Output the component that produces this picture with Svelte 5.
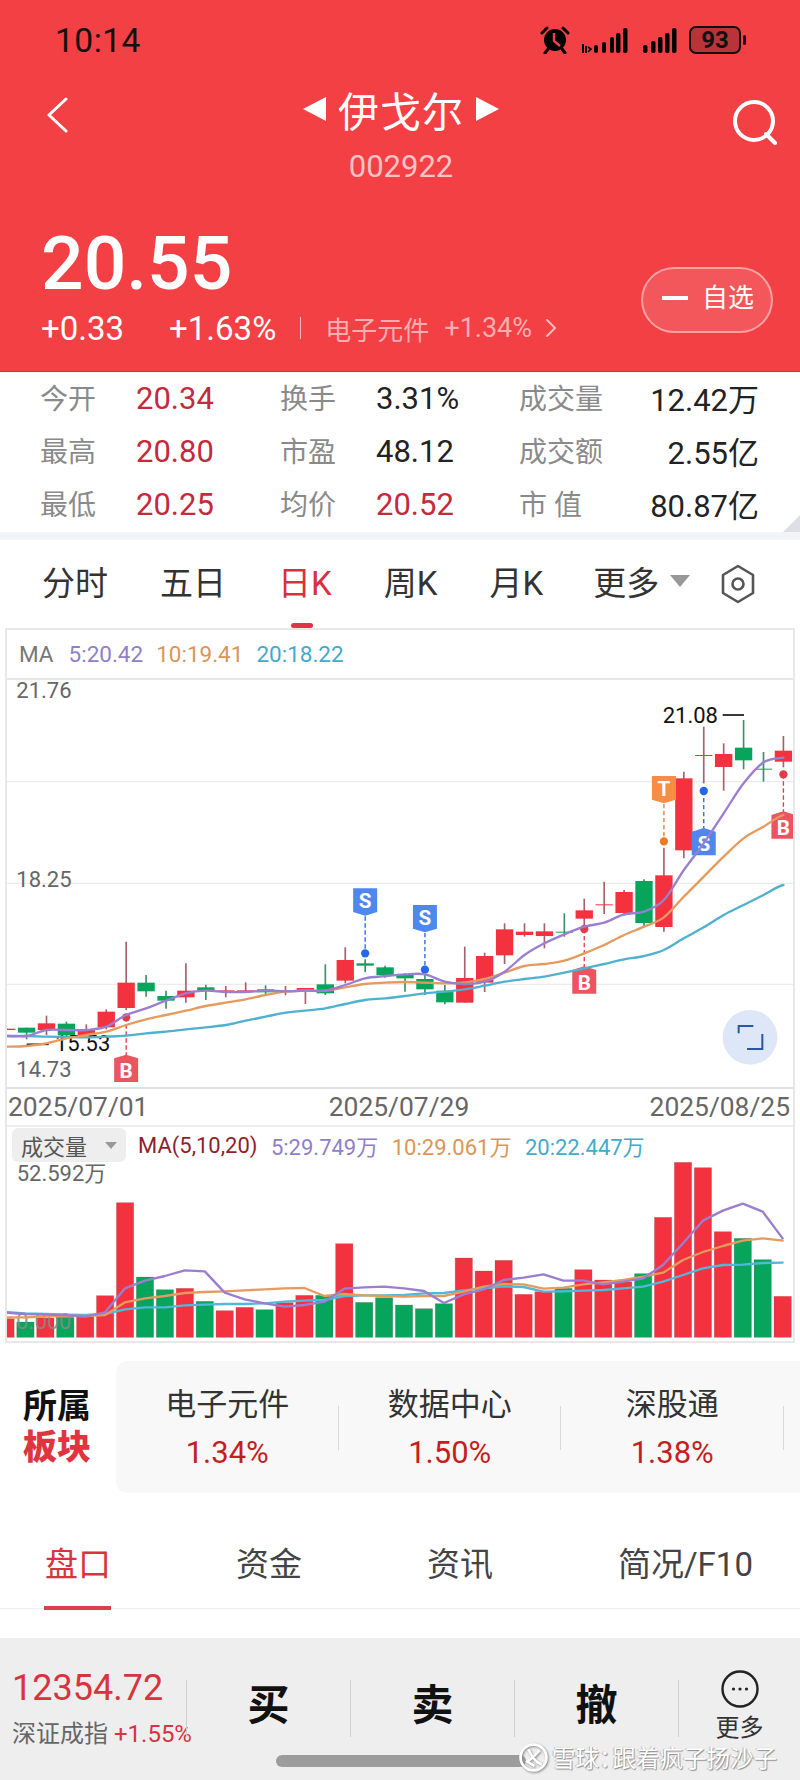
<script lang="ts">
    // chart data is kept in chart units: 3 units = 1px, x 0..2400
    const stats = [
        ["今开", "20.34", "up", "换手", "3.31%", "", "成交量", "12.42万"],
        ["最高", "20.80", "up", "市盈", "48.12", "", "成交额", "2.55亿"],
        ["最低", "20.25", "up", "均价", "20.52", "up", "市 值", "80.87亿"],
    ];
    const periods = ["分时", "五日", "日K", "周K", "月K"];
    const sectors = [
        ["电子元件", "1.34%"],
        ["数据中心", "1.50%"],
        ["深股通", "1.38%"],
    ];
    const subTabs = ["盘口", "资金", "资讯", "简况/F10"];

    // [body top, body bottom, high, low, up?]
    const candles: [number, number, number, number, number][] = [
        [1046, 1050, 1046, 1050, 1], [1043, 1058, 1043, 1078, 0], [1030, 1050, 1007, 1065, 1], [1031, 1066, 1025, 1070, 0],
        [1048, 1065, 1033, 1070, 1], [995, 1042, 988, 1048, 1], [908, 984, 785, 990, 1], [908, 934, 885, 950, 0],
        [948, 962, 932, 986, 0], [932, 952, 850, 968, 1], [922, 930, 914, 960, 0], [931, 934, 918, 952, 1],
        [931, 935, 907, 938, 1], [928, 937, 916, 945, 0], [932, 934, 918, 946, 1], [924, 930, 924, 972, 1],
        [913, 940, 853, 945, 0], [840, 902, 802, 910, 1], [850, 857, 838, 877, 0], [862, 885, 857, 893, 0],
        [885, 895, 880, 935, 0], [897, 928, 885, 945, 0], [932, 967, 915, 973, 0], [894, 968, 800, 968, 1],
        [828, 908, 818, 936, 1], [748, 826, 730, 852, 1], [755, 765, 730, 770, 1], [754, 768, 730, 805, 1],
        [755, 758, 700, 770, 0], [691, 716, 656, 735, 1], [673, 676, 605, 702, 1], [636, 699, 630, 707, 1],
        [603, 729, 598, 738, 0], [586, 741, 503, 755, 1], [295, 511, 275, 535, 1], [225, 228, 140, 310, 1],
        [222, 261, 190, 332, 1], [203, 241, 120, 268, 0], [266, 269, 216, 305, 0], [212, 245, 168, 262, 1],
    ];
    const cx = (i: number) => 20 + 59.75 * i;

    const ma5 = [1068, 1068, 1050, 1050, 1050, 1040, 1005, 985, 962, 940, 932, 936, 936, 932, 934, 932, 932, 915, 895, 888, 883, 883, 905, 912, 905, 875, 825, 790, 763, 740, 728, 703, 695, 660, 570, 490, 400, 310, 247, 233];
    const ma10 = [1100, 1098, 1090, 1075, 1065, 1055, 1035, 1018, 1005, 992, 978, 968, 958, 945, 935, 932, 932, 922, 912, 908, 906, 908, 910, 907, 897, 878, 858, 852, 842, 820, 795, 765, 740, 712, 650, 590, 530, 475, 440, 405];
    const ma20 = [1068, 1068, 1070, 1071, 1072, 1070, 1067, 1060, 1055, 1048, 1042, 1035, 1022, 1010, 998, 992, 985, 972, 960, 955, 948, 940, 935, 928, 917, 905, 897, 890, 878, 865, 852, 838, 828, 810, 775, 742, 705, 675, 645, 615];

    // volume: [bar top, up?]
    const bars: [number, number][] = [
        [626, 1], [636, 0], [624, 1], [622, 0], [620, 1], [557, 1], [278, 1], [501, 0], [539, 0], [535, 1],
        [574, 0], [602, 1], [592, 1], [599, 0], [578, 1], [556, 1], [556, 0], [401, 1], [577, 0], [563, 0],
        [585, 0], [596, 0], [581, 0], [444, 1], [483, 1], [451, 1], [553, 1], [545, 1], [535, 0], [479, 1],
        [510, 1], [516, 1], [491, 0], [322, 1], [157, 1], [173, 1], [365, 1], [385, 0], [449, 0], [559, 1],
    ];
    const bx = (i: number) => 16.5 + 59.78 * i;
    const vol5 = [608, 612, 614, 615, 620, 607, 535, 512, 498, 481, 484, 548, 568, 580, 590, 585, 575, 536, 532, 530, 535, 543, 579, 553, 538, 510, 503, 493, 512, 512, 523, 515, 505, 465, 400, 332, 302, 281, 305, 385];
    const vol10 = [622, 622, 620, 617, 618, 615, 577, 565, 558, 549, 546, 544, 541, 538, 535, 534, 558, 552, 556, 558, 560, 558, 558, 545, 530, 522, 523, 536, 533, 523, 517, 510, 500, 488, 450, 426, 408, 392, 385, 392];
    const vol20 = [606, 610, 612, 614, 615, 612, 598, 592, 592, 586, 584, 582, 582, 580, 575, 572, 570, 558, 556, 556, 555, 550, 549, 541, 535, 529, 531, 545, 544, 542, 540, 535, 530, 515, 495, 475, 465, 464, 459, 458];

    // [candle index, letter, tag top, dot y, colour of the tag, colour of the dot]
    const marks = [
        { i: 6, t: "B", top: 1135, dot: 1012, tag: "#ea5560", c: "#e23b4c" },
        { i: 18, t: "S", top: 625, dot: 820, tag: "#4f87ee", c: "#2468e6" },
        { i: 21, t: "S", top: 675, dot: 869, tag: "#4f87ee", c: "#2468e6" },
        { i: 29, t: "B", top: 870, dot: 747, tag: "#ea5560", c: "#e23b4c" },
        { i: 33, t: "T", top: 288, dot: 484, tag: "#f68d45", c: "#f07a24" },
        { i: 35, t: "S", top: 455, dot: 333, tag: "#4f87ee", c: "#2468e6" },
        { i: 39, t: "B", top: 405, dot: 283, tag: "#ea5560", c: "#e23b4c" },
    ];

    function tagPath(x: number, top: number, up: boolean) {
        const l = x - 36, r = x + 36, b = top + 71;
        return up
            ? `M${l} ${top}L${x} ${top - 11}L${r} ${top}V${b}H${l}Z`
            : `M${l} ${top}H${r}V${b}L${x} ${b + 11}L${l} ${b}Z`;
    }

    function line(ys: number[], xOf: (i: number) => number) {
        let d = `M${xOf(0)} ${ys[0]}`;
        for (let i = 0; i < ys.length - 1; i++) {
            const p0 = ys[Math.max(i - 1, 0)], p1 = ys[i], p2 = ys[i + 1], p3 = ys[Math.min(i + 2, ys.length - 1)];
            const k = 59.75 / 3;
            d += `C${xOf(i) + k} ${p1 + (p2 - p0) / 6} ${xOf(i + 1) - k} ${p2 - (p3 - p1) / 6} ${xOf(i + 1)} ${p2}`;
        }
        return d;
    }
    const vline = (ys: number[]) => "M" + ys.map((y, i) => `${bx(i)} ${y}`).join("L");
</script>

<div class="page">
    <header class="top">
        <div class="status">
            <span class="time">10:14</span>
            <div class="status-icons">
                <svg width="30" height="28" viewBox="0 0 30 28">
                    <path d="M2 7 7 2M28 7 23 2" stroke="#000" stroke-width="3" stroke-linecap="round" fill="none" />
                    <path d="M8 23 5 27M22 23 25 27" stroke="#000" stroke-width="3" stroke-linecap="round" fill="none" />
                    <circle cx="15" cy="14" r="11" fill="#000" />
                    <path d="M14 7V15L20 20" stroke="#f24045" stroke-width="2.4" fill="none" />
                </svg>
                <svg class="sig one" width="47" height="27" viewBox="0 0 47 27">
                    <path d="M2 17V26M5 19V26" stroke="#000" stroke-width="2" />
                    <path d="M7 20 10 22 7 25" stroke="#000" stroke-width="1.6" fill="none" />
                    <rect x="13" y="18" width="4" height="8" rx="2" />
                    <rect x="21" y="15" width="4" height="11" rx="2" />
                    <rect x="29" y="10" width="4" height="16" rx="2" />
                    <rect x="35" y="6" width="4.5" height="20" rx="2" />
                    <rect x="42" y="1" width="4.5" height="25" rx="2" />
                </svg>
                <svg class="sig two" width="34" height="27" viewBox="0 0 34 27">
                    <rect x="0" y="18" width="4.5" height="8" rx="2" />
                    <rect x="8" y="14" width="4.5" height="12" rx="2" />
                    <rect x="15" y="10" width="4.5" height="16" rx="2" />
                    <rect x="22" y="6" width="4.5" height="20" rx="2" />
                    <rect x="29" y="1" width="4.5" height="25" rx="2" />
                </svg>
                <div class="battery">
                    <span class="cell">93</span>
                    <i class="nub"></i>
                </div>
            </div>
        </div>

        <div class="nav">
            <svg class="back" width="22" height="36" viewBox="0 0 22 36">
                <path d="M20 2 3 18 20 34" stroke="#fff" stroke-width="3" fill="none" stroke-linecap="round" stroke-linejoin="round" />
            </svg>
            <div class="name">
                <div class="title">
                    <i class="tri left"></i>
                    <span>伊戈尔</span>
                    <i class="tri right"></i>
                </div>
                <div class="code">002922</div>
            </div>
            <svg class="search" width="46" height="46" viewBox="0 0 46 46">
                <circle cx="22" cy="22" r="19" stroke="#fff" stroke-width="4" fill="none" />
                <path d="M34 35 43 44" stroke="#fff" stroke-width="4" stroke-linecap="round" />
            </svg>
        </div>

        <div class="quote">
            <div>
                <div class="price">20.55</div>
                <div class="change">
                    <span class="chg">+0.33</span>
                    <span class="pct">+1.63%</span>
                    <i class="bar"></i>
                    <span class="sector">电子元件</span>
                    <span class="sector-pct">+1.34%</span>
                    <svg width="12" height="20" viewBox="0 0 12 20">
                        <path d="M2 2 10 10 2 18" stroke="#fbbcbe" stroke-width="2" fill="none" stroke-linecap="round" />
                    </svg>
                </div>
            </div>
            <button class="watch"><i></i><span>自选</span></button>
        </div>
    </header>

    <section class="stats">
        {#each stats as row}
            <span class="lbl">{row[0]}</span>
            <span class="val {row[2]}">{row[1]}</span>
            <span class="lbl">{row[3]}</span>
            <span class="val {row[5]}">{row[4]}</span>
            <span class="lbl">{row[6]}</span>
            <span class="val end">{row[7]}</span>
        {/each}
        <i class="corner"></i>
    </section>
    <div class="band"></div>

    <nav class="periods">
        {#each periods as p}
            <span class:on={p === "日K"}>{p}</span>
        {/each}
        <span class="more">更多<i class="caret"></i></span>
        <svg class="hex" width="36" height="40" viewBox="0 0 36 40">
            <path d="M18 2 33 11V29L18 38 3 29V11Z" stroke="#555" stroke-width="2.6" fill="none" stroke-linejoin="round" />
            <circle cx="18" cy="20" r="5.5" stroke="#555" stroke-width="2.6" fill="none" />
        </svg>
    </nav>

    <section class="chart">
        <div class="legend">
            <span class="ma">MA</span>
            <span class="m5">5:20.42</span>
            <span class="m10">10:19.41</span>
            <span class="m20">20:18.22</span>
        </div>

        <svg class="kline" viewBox="21 0 2358 1221">
            <path d="M0 305H2400M0 610H2400M0 913H2400" stroke="#ececec" stroke-width="4" />
            <text class="ax" x="49" y="54">21.76</text>
            <text class="ax" x="49" y="622">18.25</text>
            <text class="ax" x="49" y="1192">14.73</text>

            {#each candles as [top, bottom, hi, lo, up], i}
                <path d="M{cx(i)} {hi}V{lo}" stroke={up ? "#a8616a" : "#3c9068"} stroke-width="5" />
                <rect x={cx(i) - 26} y={top} width="52" height={bottom - top} fill={up ? "#f4323f" : "#07a55c"} />
            {/each}

            <text class="ex" x="165" y="1113">15.53</text>
            <path d="M80 1093H146" stroke="#111" stroke-width="5" />
            <text class="ex" x="1988" y="130">21.08</text>
            <path d="M2168 105H2232" stroke="#111" stroke-width="5" />

            {#each marks as m}
                {@const up = m.top > m.dot}
                <path d="M{cx(m.i)} {up ? m.dot : m.top + 84}V{up ? m.top : m.dot}" stroke={m.c} stroke-width="4" stroke-dasharray="13 8" />
                <circle cx={cx(m.i)} cy={m.dot} r="12.5" fill={m.c} />
                <path d={tagPath(cx(m.i), m.top, up)} fill={m.tag} />
                <text class="tag" x={cx(m.i)} y={m.top + 59}>{m.t}</text>
            {/each}

            <path d={line(ma20, cx)} stroke="#4fb0d0" class="ln" />
            <path d={line(ma10, cx)} stroke="#e69a5e" class="ln" />
            <path d={line(ma5, cx)} stroke="#9a7fd0" class="ln" />

            <circle cx="2250" cy="1072" r="82" fill="#dde7f8" />
            <path d="M2216 1060V1038H2260M2287 1062V1107H2241" stroke="#2a55a8" stroke-width="6" fill="none" />
        </svg>

        <div class="dates">
            <span>2025/07/01</span>
            <span>2025/07/29</span>
            <span>2025/08/25</span>
        </div>

        <div class="volume">
            <svg viewBox="21 51 2358 648">
                {#each bars as [top, up], i}
                    <rect x={bx(i) - 26} y={top} width="52" height={682 - top} fill={up ? "#f4323f" : "#07a55c"} stroke="#8a5a5a" stroke-opacity=".35" stroke-width="2" />
                {/each}
                <text class="ax zero" x="49" y="657">0.000</text>
                <text class="ax" x="50" y="212">52.592万</text>
                <path d={vline(vol20)} stroke="#4fb8dc" class="ln" />
                <path d={vline(vol10)} stroke="#e69a5e" class="ln" />
                <path d={vline(vol5)} stroke="#9a7fd0" class="ln" />
            </svg>
            <div class="vol-legend">
                <span class="chip">成交量<i></i></span>
                <span class="vma">MA(5,10,20)</span>
                <span class="m5">5:29.749万</span>
                <span class="m10">10:29.061万</span>
                <span class="m20">20:22.447万</span>
            </div>
        </div>
    </section>

    <section class="sectors">
        <div class="sec-title">所属<b>板块</b></div>
        <div class="sec-box">
            {#each sectors as [name, pct]}
                <div class="sec-cell">
                    <span>{name}</span>
                    <em>{pct}</em>
                </div>
            {/each}
        </div>
    </section>

    <nav class="subtabs">
        {#each subTabs as t, i}
            <span class:on={i === 0}>{t}</span>
        {/each}
    </nav>

    <footer class="trade">
        <div class="idx">
            <div class="idx-num">12354.72</div>
            <div class="idx-sub">深证成指 <em>+1.55%</em></div>
        </div>
        <div class="act">买</div>
        <div class="act">卖</div>
        <div class="act">撤</div>
        <div class="act last">
            <div class="more-in">
                <svg width="38" height="38" viewBox="0 0 38 38">
                    <circle cx="19" cy="19" r="17.5" stroke="#222" stroke-width="2.4" fill="none" />
                    <circle cx="12.5" cy="19" r="1.6" fill="#222" />
                    <circle cx="19" cy="19" r="1.6" fill="#222" />
                    <circle cx="25.5" cy="19" r="1.6" fill="#222" />
                </svg>
                <span>更多</span>
            </div>
        </div>
        <i class="gesture"></i>
        <div class="mark">
            <svg width="29" height="29" viewBox="0 0 28 28">
                <circle cx="14" cy="14" r="12.5" stroke="#fff" stroke-width="2.6" fill="none" />
                <path d="M9 6C12 12 15 18 22 21M20 7C16 11 13 15 8 18C11 20 13 21 15 22" stroke="#fff" stroke-width="2.4" fill="none" />
            </svg>
            <span>雪球<span class="colon">：</span>跟着疯子扬沙子</span>
        </div>
    </footer>
</div>

<style>
    :global(body) { margin: 0; background: #fff; }
    .page { position: relative; width: 800px; height: 1780px; overflow: hidden; background: #fff; font-family: Roboto, "Noto Sans CJK SC", sans-serif; }
    i { display: block; font-style: normal; }
    em { font-style: normal; }

    .top { height: 372px; background: #f24045; color: #fff; border-bottom: 1px solid #c9383d; box-sizing: border-box; }
    .status { height: 80px; display: flex; align-items: center; justify-content: space-between; padding: 0 54px 0 55px; box-sizing: border-box; }
    .time { font-size: 33.5px; color: #111; letter-spacing: .5px; }
    .status-icons { display: flex; align-items: center; }
    .sig { fill: #000; }
    .sig.one { margin-left: 11px; }
    .sig.two { margin-left: 15px; }
    .battery { display: flex; align-items: center; margin-left: 12px; }
    .cell { width: 52px; height: 28px; box-sizing: border-box; border: 2px solid #111; border-radius: 7px; background: #ba3338; color: #111; font-size: 24px; font-weight: 700; line-height: 24px; text-align: center; }
    .nub { width: 3px; height: 10px; margin-left: 2px; border-radius: 2px; background: #111; }

    .nav { height: 109px; display: flex; justify-content: space-between; padding: 0 22px 0 46px; }
    .back { margin-top: 17px; }
    .search { margin-top: 19px; margin-right: 0; }
    .name { text-align: center; margin-left: 2px; }
    .title { height: 58px; display: flex; align-items: center; justify-content: center; gap: 12px; }
    .title span { font-size: 41px; letter-spacing: 1px; }
    .tri { width: 0; height: 0; border-top: 12px solid transparent; border-bottom: 12px solid transparent; }
    .tri.left { border-right: 23px solid #fff; }
    .tri.right { border-left: 23px solid #fff; }
    .code { height: 44px; margin-top: 7px; line-height: 44px; font-size: 31px; color: #fbc3c5; }

    .quote { display: flex; justify-content: space-between; align-items: flex-end; padding: 34px 27px 0 41px; }
    .price { font-size: 75px; line-height: 80px; font-weight: 500; }
    .change { display: flex; align-items: center; height: 50px; font-size: 33px; }
    .pct { margin-left: 45px; }
    .bar { width: 1px; height: 22px; margin: 0 24px; background: #fbbcbe; }
    .sector { font-size: 26px; color: #fbaeb1; }
    .sector-pct { margin: 0 13px 0 15px; font-size: 27px; color: #fbaeb1; }
    .watch { width: 132px; height: 66px; margin-bottom: 20px; padding: 0 0 4px 19px; display: flex; align-items: center; gap: 14px; border: 2px solid rgba(255, 255, 255, .45); border-radius: 33px; background: rgba(255, 255, 255, .12); color: #fff; font: 26px Roboto, "Noto Sans CJK SC", sans-serif; box-sizing: border-box; }
    .watch i { width: 26px; height: 4px; background: #fff; }
    .watch span { margin-top: -5px; }

    .stats { position: relative; display: grid; grid-template-columns: 96px 144px 96px 143px auto 1fr; grid-auto-rows: 53px; align-items: center; height: 160px; padding: 0 41px 0 40px; box-sizing: border-box; }
    .lbl { margin-top: -4px; font-size: 28px; color: #8a8a8a; }
    .val { font-size: 31px; color: #222; }
    .val.up { color: #c52a3c; }
    .val.end { margin-top: -3px; text-align: right; }
    .corner { position: absolute; right: 0; bottom: 0; width: 17px; height: 17px; background: #dcdfe4; clip-path: polygon(100% 0, 100% 100%, 0 100%); }
    .band { height: 8px; background: #f3f4f6; }

    .periods { position: relative; height: 88px; box-sizing: border-box; padding: 0 0 6px 42px; display: flex; align-items: center; gap: 52px; font-size: 33px; color: #333; }
    .periods .on { position: relative; color: #d8303e; }
    .periods .on::after { content: ""; position: absolute; left: 13px; bottom: -23px; width: 22px; height: 5px; border-radius: 3px; background: #dc3545; }
    .more { display: flex; align-items: center; margin-left: -2px; }
    .caret { margin-left: 11px; width: 0; height: 0; border-left: 10px solid transparent; border-right: 10px solid transparent; border-top: 12px solid #999; }
    .hex { position: absolute; right: 44px; top: 24px; }

    .chart { width: 790px; margin-left: 5px; box-sizing: border-box; border: 2px solid #e8e8e8; height: 715px; }
    .legend { height: 50px; display: flex; align-items: center; box-sizing: border-box; border-bottom: 2px solid #e8e8e8; padding-left: 12px; font-size: 22.5px; }
    .ma { color: #777; margin-right: 15px; }
    .m5 { color: #8f7fc8; }
    .m10 { color: #dc9558; margin-left: 13px; }
    .m20 { color: #44a9cf; margin-left: 13px; }

    .kline { display: block; width: 786px; height: 407px; border-bottom: 2px solid #e0e0e0; }
    .volume svg { display: block; width: 786px; height: 216px; }
    .ax { font-size: 66px; fill: #666; }
    .zero { fill: #888; opacity: .9; }
    .ex { font-size: 66px; fill: #111; }
    .tag { font-size: 62px; font-weight: 700; fill: #fff; text-anchor: middle; }
    .ln { fill: none; stroke-width: 7; stroke-linejoin: round; stroke-linecap: round; }

    .dates { height: 36px; display: flex; justify-content: space-between; align-items: center; padding: 0 3px 0 1px; font-size: 26.4px; color: #666; border-bottom: 2px solid #eee; }

    .volume { position: relative; }
    .vol-legend { position: absolute; left: 5px; top: 0; display: flex; align-items: center; height: 36px; font-size: 22px; white-space: nowrap; }
    .chip { width: 114px; height: 34px; display: flex; align-items: center; padding-left: 9px; box-sizing: border-box; border-radius: 6px; background: #eee; color: #555; font-size: 22px; }
    .chip i { margin-left: 18px; width: 0; height: 0; border-left: 6px solid transparent; border-right: 6px solid transparent; border-top: 7px solid #999; }
    .vma { margin: 0 13.5px 0 12px; color: #8f1f2a; }
    .vol-legend .m10, .vol-legend .m20 { margin-left: 13.5px; }

    .sectors { display: flex; height: 132px; margin-top: 18px; }
    .sec-title { width: 116px; padding-left: 23px; box-sizing: border-box; display: flex; flex-direction: column; justify-content: center; font-size: 34px; line-height: 41px; font-weight: 700; color: #111; }
    .sec-title b { color: #e0353f; }
    .sec-box { flex: 1; display: grid; grid-template-columns: repeat(3, 222.5px); background: #f8f8f8; border-radius: 12px 0 0 12px; }
    .sec-cell { position: relative; padding-top: 3px; display: flex; flex-direction: column; align-items: center; justify-content: center; gap: 8px; font-size: 31px; line-height: 40px; color: #333; }
    .sec-cell em { color: #c41f1f; }
    .sec-cell::after { content: ""; position: absolute; right: 0; top: 45px; width: 1px; height: 44px; background: #d9d9d9; }

    .subtabs { height: 90px; margin-top: 26px; padding: 0 0 3px 45px; box-sizing: border-box; display: grid; grid-template-columns: 191px 191px 191px auto; align-items: center; border-bottom: 1px solid #eee; font-size: 33px; color: #444; }
    .subtabs .on { position: relative; color: #d8343f; }
    .subtabs .on::after { content: ""; position: absolute; left: -1px; bottom: -24px; width: 67px; height: 4px; background: #d9404c; }

    .trade { position: relative; margin-top: 29px; height: 142px; box-sizing: border-box; padding-top: 42px; display: flex; align-items: flex-start; background: #eee; }
    .idx { flex: none; width: 186px; padding-left: 12px; margin-top: -10px; box-sizing: border-box; white-space: nowrap; }
    .idx-num { font-size: 36px; line-height: 36px; color: #d8343f; }
    .idx-sub { margin-top: 13px; font-size: 24px; line-height: 30px; color: #666; }
    .idx-sub em { color: #d8343f; }
    .act { flex: none; width: 164px; height: 57px; box-sizing: border-box; padding-bottom: 14px; border-left: 1px solid #cfcfcf; display: flex; align-items: center; justify-content: center; font-size: 42px; font-weight: 700; color: #111; }
    .act.last { flex: 1; width: auto; }
    .more-in { display: flex; flex-direction: column; align-items: center; margin-top: 8px; gap: 6px; font-size: 24px; font-weight: 400; line-height: 28px; color: #333; }
    .more-in span { display: block; }
    .more-in svg { display: block; }
    .gesture { position: absolute; left: 276px; top: 117px; width: 250px; height: 12px; border-radius: 6px; background: #9c9c9c; }
    .mark { position: absolute; left: 519px; top: 102px; display: flex; align-items: center; gap: 4px; font-size: 23.5px; color: #fff; white-space: nowrap; text-shadow: 1px 1px 1px #8d8d8d, -1px 0 1px #b5b5b5; }
    .mark svg { filter: drop-shadow(1px 1px 1px #888); }
    .colon { margin-right: -10px; }
</style>
